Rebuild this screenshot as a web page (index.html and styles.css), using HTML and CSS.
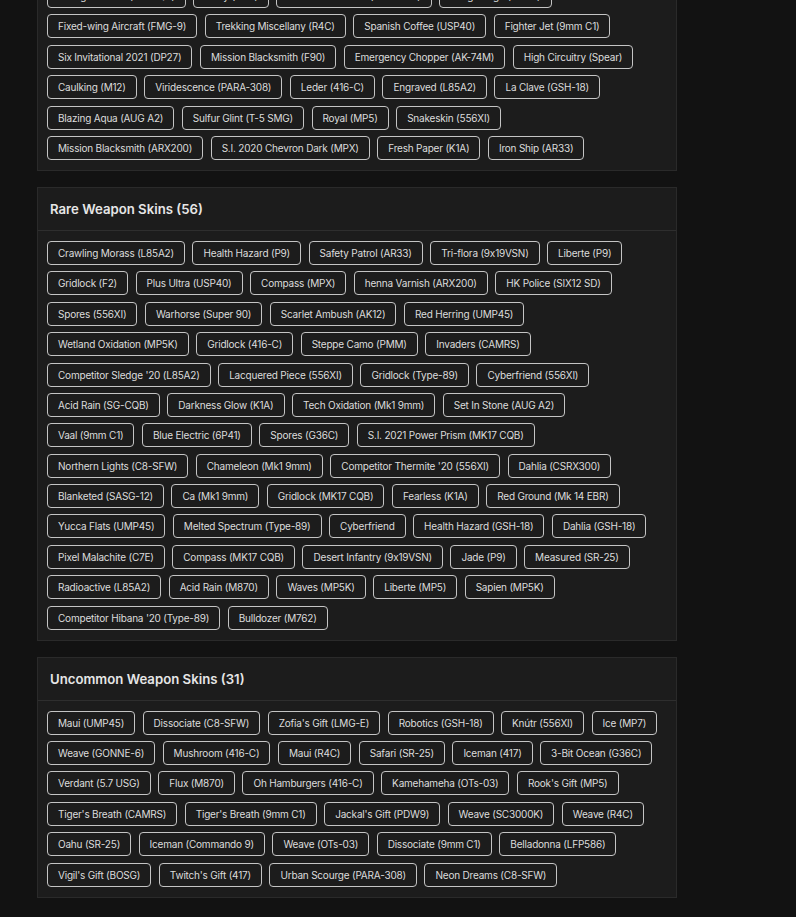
FILE: index.html
```html
<!DOCTYPE html>
<html>
<head>
    <title>Weapon Skins</title>
    <link rel="stylesheet" href="styles.css">
</head>
<body>
    <div class="skins">

        <div class="skin-card first-card">
            <div class="tag-list">
                <div class="tag-row">
                    <span class="tag">Orange Inferno (SG-CQB)</span>
                    <span class="tag">Glory (R4C)</span>
                    <span class="tag">Emerald Obsidian (CSRX300)</span>
                    <span class="tag">Long Range (G36C)</span>
                </div>
                <div class="tag-row">
                    <span class="tag">Fixed-wing Aircraft (FMG-9)</span>
                    <span class="tag">Trekking Miscellany (R4C)</span>
                    <span class="tag">Spanish Coffee (USP40)</span>
                    <span class="tag">Fighter Jet (9mm C1)</span>
                </div>
                <div class="tag-row">
                    <span class="tag">Six Invitational 2021 (DP27)</span>
                    <span class="tag">Mission Blacksmith (F90)</span>
                    <span class="tag">Emergency Chopper (AK-74M)</span>
                    <span class="tag">High Circuitry (Spear)</span>
                </div>
                <div class="tag-row">
                    <span class="tag">Caulking (M12)</span>
                    <span class="tag">Viridescence (PARA-308)</span>
                    <span class="tag">Leder (416-C)</span>
                    <span class="tag">Engraved (L85A2)</span>
                    <span class="tag">La Clave (GSH-18)</span>
                </div>
                <div class="tag-row">
                    <span class="tag">Blazing Aqua (AUG A2)</span>
                    <span class="tag">Sulfur Glint (T-5 SMG)</span>
                    <span class="tag">Royal (MP5)</span>
                    <span class="tag">Snakeskin (556XI)</span>
                </div>
                <div class="tag-row">
                    <span class="tag">Mission Blacksmith (ARX200)</span>
                    <span class="tag">S.I. 2020 Chevron Dark (MPX)</span>
                    <span class="tag">Fresh Paper (K1A)</span>
                    <span class="tag">Iron Ship (AR33)</span>
                </div>
            </div>
        </div>

        <div class="skin-card">
            <div class="card-header">Rare Weapon Skins (56)</div>
            <div class="tag-list">
                <div class="tag-row">
                    <span class="tag">Crawling Morass (L85A2)</span>
                    <span class="tag">Health Hazard (P9)</span>
                    <span class="tag">Safety Patrol (AR33)</span>
                    <span class="tag">Tri-flora (9x19VSN)</span>
                    <span class="tag">Liberte (P9)</span>
                </div>
                <div class="tag-row">
                    <span class="tag">Gridlock (F2)</span>
                    <span class="tag">Plus Ultra (USP40)</span>
                    <span class="tag">Compass (MPX)</span>
                    <span class="tag">henna Varnish (ARX200)</span>
                    <span class="tag">HK Police (SIX12 SD)</span>
                </div>
                <div class="tag-row">
                    <span class="tag">Spores (556XI)</span>
                    <span class="tag">Warhorse (Super 90)</span>
                    <span class="tag">Scarlet Ambush (AK12)</span>
                    <span class="tag">Red Herring (UMP45)</span>
                </div>
                <div class="tag-row">
                    <span class="tag">Wetland Oxidation (MP5K)</span>
                    <span class="tag">Gridlock (416-C)</span>
                    <span class="tag">Steppe Camo (PMM)</span>
                    <span class="tag">Invaders (CAMRS)</span>
                </div>
                <div class="tag-row">
                    <span class="tag">Competitor Sledge '20 (L85A2)</span>
                    <span class="tag">Lacquered Piece (556XI)</span>
                    <span class="tag">Gridlock (Type-89)</span>
                    <span class="tag">Cyberfriend (556XI)</span>
                </div>
                <div class="tag-row">
                    <span class="tag">Acid Rain (SG-CQB)</span>
                    <span class="tag">Darkness Glow (K1A)</span>
                    <span class="tag">Tech Oxidation (Mk1 9mm)</span>
                    <span class="tag">Set In Stone (AUG A2)</span>
                </div>
                <div class="tag-row">
                    <span class="tag">Vaal (9mm C1)</span>
                    <span class="tag">Blue Electric (6P41)</span>
                    <span class="tag">Spores (G36C)</span>
                    <span class="tag">S.I. 2021 Power Prism (MK17 CQB)</span>
                </div>
                <div class="tag-row">
                    <span class="tag">Northern Lights (C8-SFW)</span>
                    <span class="tag">Chameleon (Mk1 9mm)</span>
                    <span class="tag">Competitor Thermite '20 (556XI)</span>
                    <span class="tag">Dahlia (CSRX300)</span>
                </div>
                <div class="tag-row">
                    <span class="tag">Blanketed (SASG-12)</span>
                    <span class="tag">Ca (Mk1 9mm)</span>
                    <span class="tag">Gridlock (MK17 CQB)</span>
                    <span class="tag">Fearless (K1A)</span>
                    <span class="tag">Red Ground (Mk 14 EBR)</span>
                </div>
                <div class="tag-row">
                    <span class="tag">Yucca Flats (UMP45)</span>
                    <span class="tag">Melted Spectrum (Type-89)</span>
                    <span class="tag">Cyberfriend</span>
                    <span class="tag">Health Hazard (GSH-18)</span>
                    <span class="tag">Dahlia (GSH-18)</span>
                </div>
                <div class="tag-row">
                    <span class="tag">Pixel Malachite (C7E)</span>
                    <span class="tag">Compass (MK17 CQB)</span>
                    <span class="tag">Desert Infantry (9x19VSN)</span>
                    <span class="tag">Jade (P9)</span>
                    <span class="tag">Measured (SR-25)</span>
                </div>
                <div class="tag-row">
                    <span class="tag">Radioactive (L85A2)</span>
                    <span class="tag">Acid Rain (M870)</span>
                    <span class="tag">Waves (MP5K)</span>
                    <span class="tag">Liberte (MP5)</span>
                    <span class="tag">Sapien (MP5K)</span>
                </div>
                <div class="tag-row">
                    <span class="tag">Competitor Hibana '20 (Type-89)</span>
                    <span class="tag">Bulldozer (M762)</span>
                </div>
            </div>
        </div>

        <div class="skin-card">
            <div class="card-header">Uncommon Weapon Skins (31)</div>
            <div class="tag-list">
                <div class="tag-row">
                    <span class="tag">Maui (UMP45)</span>
                    <span class="tag">Dissociate (C8-SFW)</span>
                    <span class="tag">Zofia's Gift (LMG-E)</span>
                    <span class="tag">Robotics (GSH-18)</span>
                    <span class="tag">Knútr (556XI)</span>
                    <span class="tag">Ice (MP7)</span>
                </div>
                <div class="tag-row">
                    <span class="tag">Weave (GONNE-6)</span>
                    <span class="tag">Mushroom (416-C)</span>
                    <span class="tag">Maui (R4C)</span>
                    <span class="tag">Safari (SR-25)</span>
                    <span class="tag">Iceman (417)</span>
                    <span class="tag">3-Bit Ocean (G36C)</span>
                </div>
                <div class="tag-row">
                    <span class="tag">Verdant (5.7 USG)</span>
                    <span class="tag">Flux (M870)</span>
                    <span class="tag">Oh Hamburgers (416-C)</span>
                    <span class="tag">Kamehameha (OTs-03)</span>
                    <span class="tag">Rook's Gift (MP5)</span>
                </div>
                <div class="tag-row">
                    <span class="tag">Tiger's Breath (CAMRS)</span>
                    <span class="tag">Tiger's Breath (9mm C1)</span>
                    <span class="tag">Jackal's Gift (PDW9)</span>
                    <span class="tag">Weave (SC3000K)</span>
                    <span class="tag">Weave (R4C)</span>
                </div>
                <div class="tag-row">
                    <span class="tag">Oahu (SR-25)</span>
                    <span class="tag">Iceman (Commando 9)</span>
                    <span class="tag">Weave (OTs-03)</span>
                    <span class="tag">Dissociate (9mm C1)</span>
                    <span class="tag">Belladonna (LFP586)</span>
                </div>
                <div class="tag-row">
                    <span class="tag">Vigil's Gift (BOSG)</span>
                    <span class="tag">Twitch's Gift (417)</span>
                    <span class="tag">Urban Scourge (PARA-308)</span>
                    <span class="tag">Neon Dreams (C8-SFW)</span>
                </div>
            </div>
        </div>

    </div>
</body>
</html>
```

FILE: styles.css
```css
body {
    margin: 0;
    background: #121212;
    color: #e2e2e2;
    font-family: Inter, "Open Sans", sans-serif;
}
.skins {
    width: 640px;
    margin-left: 37px;
    display: flex;
    flex-direction: column;
    gap: 16px;
    padding-bottom: 40px;
}
.skin-card {
    background: #1c1c1c;
    border: 1px solid #2a2a2a;
}
.first-card {
    margin-top: -27px;
}
.card-header {
    height: 42px;
    padding: 0 12px;
    display: flex;
    align-items: center;
    font-size: 13.2px;
    font-weight: 600;
    color: #e6e6e6;
    border-bottom: 1px solid #2e2e2e;
}
.tag-list {
    display: flex;
    flex-direction: column;
    gap: 6.4px;
    padding: 10px 9px;
}
.tag-row {
    display: flex;
    gap: 7.5px;
}
.tag {
    display: inline-block;
    padding: 4px 10px;
    font-size: 10px;
    line-height: 14px;
    letter-spacing: -0.2px;
    color: #dcdcdc;
    border: 1px solid #c4c4c4;
    border-radius: 4px;
    white-space: nowrap;
}
```
